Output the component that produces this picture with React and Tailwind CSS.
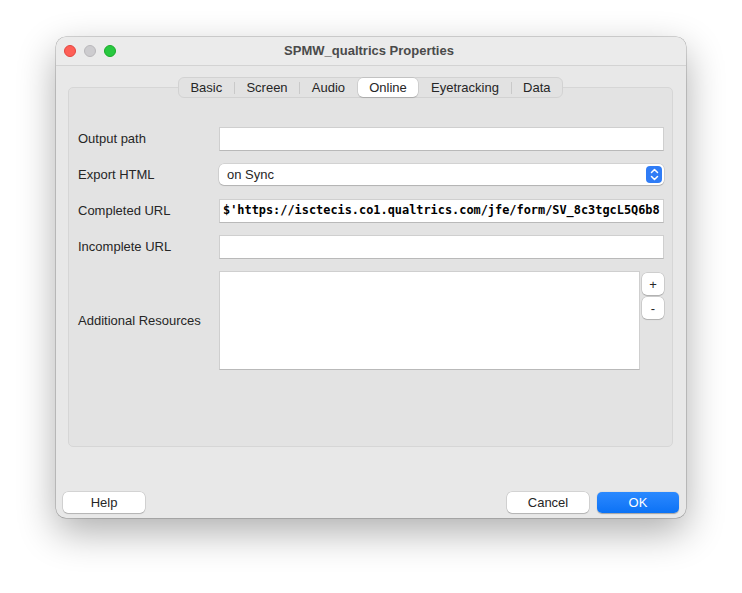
import React from 'react';

const tabs = ['Basic', 'Screen', 'Audio', 'Online', 'Eyetracking', 'Data'];

const TextField = ({ children, mono }) => (
  <div className="h-[24px] flex-1 bg-white border border-[#cfcfcf] border-b-[#b9b9b9] flex items-center px-[3px] overflow-hidden whitespace-nowrap">
    {children && (
      <span className={mono ? "font-['DejaVu_Sans_Mono',monospace] font-bold text-[11.9px] text-black" : ''}>{children}</span>
    )}
  </div>
);

const Row = ({ label, children, className = '' }) => (
  <div className={`flex items-center ${className}`}>
    <div className="w-[141px] shrink-0 text-[13px] text-[#262626]">{label}</div>
    {children}
  </div>
);

const PushButton = ({ children, primary }) => (
  <button
    className={
      primary
        ? 'w-[82px] h-[21px] rounded-[5px] bg-gradient-to-b from-[#2a89ff] to-[#0a72f5] text-white text-[13px] font-medium shadow-[0_0.5px_1px_rgba(0,0,0,0.3)]'
        : 'w-[82px] h-[21px] rounded-[5px] bg-white text-[#262626] text-[13px] shadow-[0_0_0_0.5px_rgba(0,0,0,0.18),0_1px_1px_rgba(0,0,0,0.15)]'
    }
  >
    {children}
  </button>
);

const SmallButton = ({ children }) => (
  <button className="w-[22px] h-[22px] rounded-[5px] bg-white text-[13px] leading-none text-[#262626] shadow-[0_0_0_0.5px_rgba(0,0,0,0.18),0_1px_1px_rgba(0,0,0,0.15)] flex items-center justify-center">
    {children}
  </button>
);

export default function App() {
  return (
    <div className="w-[742px] h-[593px] bg-white pl-[56px] pt-[37px] font-['Liberation_Sans',Arial,sans-serif]">
      <div className="w-[630px] h-[481px] rounded-[10px] bg-[#e8e8e8] overflow-hidden flex flex-col shadow-[0_14px_38px_rgba(0,0,0,0.32),0_0_0_0.5px_rgba(0,0,0,0.3)]">
        {/* title bar */}
        <div className="h-[29px] shrink-0 bg-[#ebebeb] border-b border-[#d3d3d3] flex items-center relative">
          <div className="flex gap-[8px] pl-[8px]">
            <span className="w-[12px] h-[12px] rounded-full bg-[#fe5f57] border-[0.5px] border-[#e2463f]" />
            <span className="w-[12px] h-[12px] rounded-full bg-[#cdcccf] border-[0.5px] border-[#b9b8bb]" />
            <span className="w-[12px] h-[12px] rounded-full bg-[#28c840] border-[0.5px] border-[#1aab29]" />
          </div>
          <div className="flex-1 text-center pr-[64px] text-[13px] font-bold text-[#4a4a4a]">SPMW_qualtrics Properties</div>
        </div>

        {/* body */}
        <div className="flex-1 flex flex-col px-[12px] pt-[21px]">
          <div className="w-[605px] h-[360px] rounded-[5px] bg-[#e3e3e3] border border-[#d6d6d6] flex flex-col">
            <div className="-mt-[11px] self-center flex h-[21px] rounded-[6px] bg-[#e2e2e2] border border-[#d2d2d2] text-[13px] text-[#262626]">
              {tabs.map((t, i) => {
                const active = t === 'Online';
                const next = tabs[i + 1];
                const sep = i < tabs.length - 1 && !active && next !== 'Online';
                return (
                  <div key={t} className="flex items-center">
                    <div
                      className={
                        active
                          ? 'h-[19px] px-[11.6px] flex items-center bg-white rounded-[5px] shadow-[0_0_0_0.5px_rgba(0,0,0,0.15),0_1px_1px_rgba(0,0,0,0.12)]'
                          : 'h-[19px] px-[11.6px] flex items-center'
                      }
                    >
                      {t}
                    </div>
                    {i < tabs.length - 1 && (
                      <div className={`w-px h-[12px] ${sep ? 'bg-[#c9c9c9]' : 'bg-transparent'}`} />
                    )}
                  </div>
                );
              })}
            </div>

            <div className="flex flex-col pl-[9px] pr-[8px] pt-[29px]">
              <Row label="Output path">
                <TextField />
              </Row>
              <Row label="Export HTML" className="mt-[13px]">
                <div className="flex-1 h-[21px] rounded-[5px] bg-white shadow-[0_0_0_0.5px_rgba(0,0,0,0.15),0_1px_1px_rgba(0,0,0,0.15)] flex items-center justify-between pl-[8px] pr-[2px]">
                  <span className="text-[13px] text-[#262626]">on Sync</span>
                  <div className="w-[16px] h-[17px] rounded-[4px] bg-[#2f7cf6] flex items-center justify-center">
                    <svg width="9" height="13" viewBox="0 0 9 13" fill="none" stroke="white" strokeWidth="1.5" strokeLinecap="round" strokeLinejoin="round">
                      <path d="M1.5 4.5 L4.5 1.5 L7.5 4.5" />
                      <path d="M1.5 8.5 L4.5 11.5 L7.5 8.5" />
                    </svg>
                  </div>
                </div>
              </Row>
              <Row label="Completed URL" className="mt-[14px]">
                <TextField mono>$'https://isctecis.co1.qualtrics.com/jfe/form/SV_8c3tgcL5Q6b8</TextField>
              </Row>
              <Row label="Incomplete URL" className="mt-[12px]">
                <TextField />
              </Row>
              <Row label="Additional Resources" className="mt-[12px]">
                <div className="flex-1 flex items-start gap-[2px]">
                  <div className="flex-1 h-[99px] bg-white border border-[#cfcfcf] border-b-[#b9b9b9]" />
                  <div className="flex flex-col gap-[2px] pt-[2px]">
                    <SmallButton>+</SmallButton>
                    <SmallButton>-</SmallButton>
                  </div>
                </div>
              </Row>
            </div>
          </div>

          <div className="mt-[45px] flex items-center justify-between -mx-[5px]">
            <PushButton>Help</PushButton>
            <div className="flex gap-[8px]">
              <PushButton>Cancel</PushButton>
              <PushButton primary>OK</PushButton>
            </div>
          </div>
        </div>
      </div>
    </div>
  );
}
